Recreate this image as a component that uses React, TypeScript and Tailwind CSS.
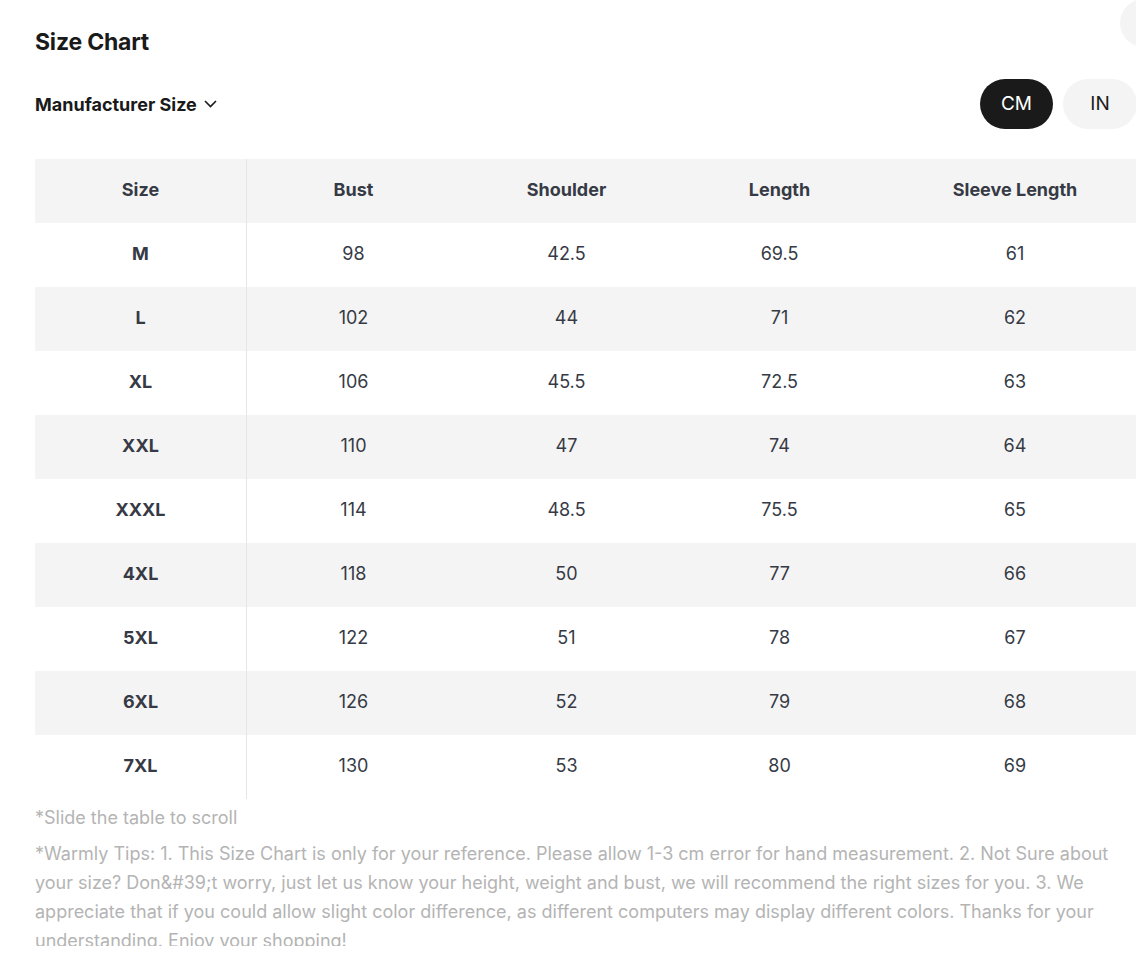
import React, { useState } from 'react';

const headers = ['Size', 'Bust', 'Shoulder', 'Length', 'Sleeve Length'];

const rows = [
  ['M', '98', '42.5', '69.5', '61'],
  ['L', '102', '44', '71', '62'],
  ['XL', '106', '45.5', '72.5', '63'],
  ['XXL', '110', '47', '74', '64'],
  ['XXXL', '114', '48.5', '75.5', '65'],
  ['4XL', '118', '50', '77', '66'],
  ['5XL', '122', '51', '78', '67'],
  ['6XL', '126', '52', '79', '68'],
  ['7XL', '130', '53', '80', '69'],
];

const colWidths = ['w-[212px]', 'w-[213px]', 'w-[213px]', 'w-[213px]', 'w-[258px]'];

export default function App() {
  const [unit, setUnit] = useState<'CM' | 'IN'>('CM');

  return (
    <div className="relative h-[946px] overflow-hidden bg-white pl-[35px] font-['Inter',sans-serif] text-[#1a1a1a]">
      {/* close button, cut off by the window edge */}
      <button className="absolute -top-[1px] left-[1120px] h-[48px] w-[48px] rounded-full bg-[#f4f4f4]" />

      <h2 className="pt-[28px] text-[23px] font-bold leading-[28px] tracking-[-0.2px]">Size Chart</h2>

      <div className="mt-[23px] flex items-center justify-between">
        <button className="flex items-center gap-[7px] text-[18px] font-bold">
          Manufacturer Size
          <svg width="13" height="8" viewBox="0 0 13 8" fill="none" stroke="#1a1a1a" strokeWidth="1.6">
            <path d="M1 1l5.5 5.5L12 1" />
          </svg>
        </button>
        <div className="-mr-[1px] flex gap-[10px]">
          {(['CM', 'IN'] as const).map((u) => (
            <button
              key={u}
              onClick={() => setUnit(u)}
              className={
                unit === u
                  ? 'h-[50px] w-[73px] rounded-full bg-[#1a1a1a] text-[19px] text-white'
                  : 'h-[50px] w-[74px] rounded-full bg-[#f4f4f4] text-[19px] text-[#1a1a1a]'
              }
            >
              {u}
            </button>
          ))}
        </div>
      </div>

      <div className="mt-[30px] w-[1109px]">
        <div className="flex h-[64px] bg-[#f4f4f4]">
          {headers.map((h, i) => (
            <div
              key={h}
              className={`${colWidths[i]} flex shrink-0 items-center justify-center pb-[3px] text-[18px] font-bold text-[#363a45] ${i === 0 ? 'border-r border-[#e6e6e6]' : ''}`}
            >
              {h}
            </div>
          ))}
        </div>
        {rows.map((r, ri) => (
          <div key={r[0]} className={`flex h-[64px] ${ri % 2 === 1 ? 'bg-[#f4f4f4]' : 'bg-white'}`}>
            {r.map((c, i) => (
              <div
                key={i}
                className={`${colWidths[i]} flex shrink-0 items-center justify-center pb-[3px] text-[18px] text-[#363a45] ${i === 0 ? 'border-r border-[#e6e6e6] font-bold' : ''}`}
              >
                {c}
              </div>
            ))}
          </div>
        ))}
      </div>

      <p className="mt-[7px] text-[18px] leading-[24px] text-[#b4b4b4]">*Slide the table to scroll</p>
      <p className="mt-[9px] w-[1085px] text-[18px] leading-[29px] text-[#b4b4b4]">
        *Warmly Tips: 1. This Size Chart is only for your reference. Please allow 1-3 cm error for hand measurement. 2. Not Sure about your size? Don&amp;#39;t worry, just let us know your height, weight and bust, we will recommend the right sizes for you. 3. We appreciate that if you could allow slight color difference, as different computers may display different colors. Thanks for your understanding. Enjoy your shopping!
      </p>
    </div>
  );
}
